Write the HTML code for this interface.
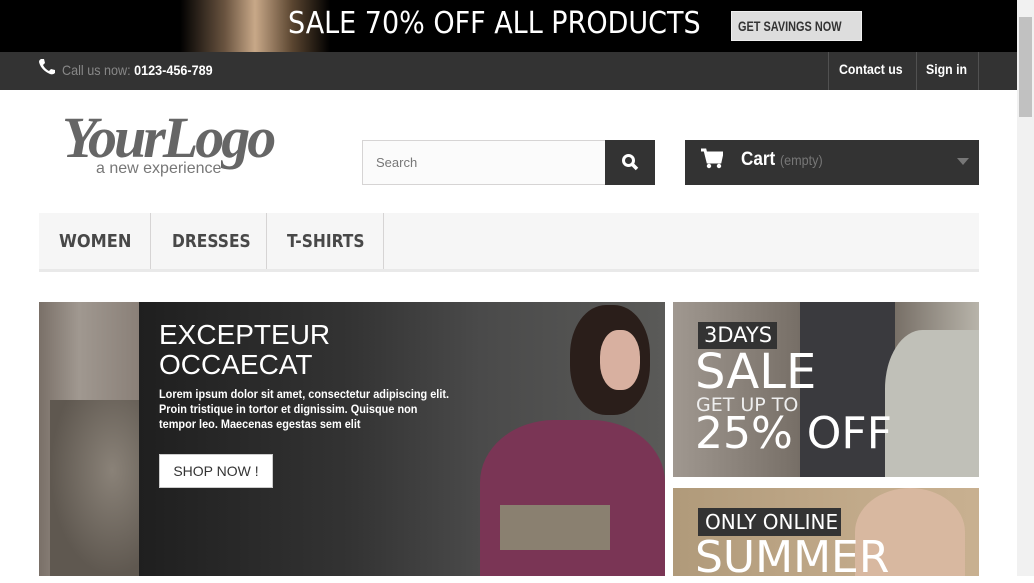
<!DOCTYPE html>
<html><head><style>
*{margin:0;padding:0;box-sizing:border-box}
body{width:1034px;height:576px;overflow:hidden;background:#fff;font-family:"Liberation Sans",sans-serif;position:relative}
.a{position:absolute}
.n{display:inline-block;transform-origin:0 0;white-space:nowrap}
</style></head><body>
<div class="a" style="left:0;top:0;width:1017px;height:52px;background:#000"></div>
<div class="a" style="left:180px;top:0;width:150px;height:52px;background:linear-gradient(90deg,#000,#6a5440 30%,#c8a888 50%,#5a4530 75%,#000)"></div>
<div class="a" style="left:288px;top:6px;font-size:30px;color:#fff;font-family:'DejaVu Sans Condensed','DejaVu Sans',sans-serif;white-space:nowrap">SALE 70% OFF ALL PRODUCTS</div>
<div class="a" style="left:731px;top:11px;width:131px;height:30px;background:#ddd;border:1px solid #eee;font-size:14px;color:#333;line-height:28px;font-weight:bold;padding-left:6px;white-space:nowrap"><span class="n" style="transform:scaleX(0.78)">GET SAVINGS NOW</span></div>
<div class="a" style="left:0;top:52px;width:1017px;height:38px;background:#333"></div>
<svg class="a" style="left:38px;top:58px" width="18" height="18" viewBox="0 0 18 18"><path d="M3 1 L6 1 L7 5 L5 7 Q7 11 11 13 L13 11 L17 12 L17 15 Q15 17 12 16 Q3 12 1 4 Q1 2 3 1Z" fill="#fff"/></svg>
<div class="a" style="left:62px;top:62px;font-size:14px;color:#888;white-space:nowrap"><span class="n" style="transform:scaleX(0.9)">Call us now: <b style="color:#fff">0123-456-789</b></span></div>
<div class="a" style="left:828px;top:52px;width:1px;height:38px;background:#515151"></div>
<div class="a" style="left:916px;top:52px;width:1px;height:38px;background:#515151"></div>
<div class="a" style="left:978px;top:52px;width:1px;height:38px;background:#515151"></div>
<div class="a" style="left:839px;top:61px;font-size:14px;color:#fff;font-weight:bold"><span class="n" style="transform:scaleX(0.88)">Contact us</span></div>
<div class="a" style="left:926px;top:61px;font-size:14px;color:#fff;font-weight:bold"><span class="n" style="transform:scaleX(0.88)">Sign in</span></div>
<div class="a" style="left:62px;top:104px;font-size:58px;color:#666;font-family:'Liberation Serif',serif;font-style:italic;font-weight:bold;letter-spacing:-3px;white-space:nowrap">YourLogo</div>
<div class="a" style="left:96px;top:160px;font-size:16px;color:#777;background:#fff;line-height:18px">a new experience</div>
<div class="a" style="left:362px;top:140px;width:244px;height:45px;background:#fbfbfb;border:1px solid #d6d4d4;font-size:13px;color:#777;padding:14px 13px">Search</div>
<div class="a" style="left:605px;top:140px;width:50px;height:45px;background:#333"></div>
<svg class="a" style="left:621px;top:153px" width="18" height="18" viewBox="0 0 18 18"><circle cx="7.5" cy="7.5" r="5" fill="none" stroke="#fff" stroke-width="3"/><path d="M11 11 L16 16" stroke="#fff" stroke-width="3.5"/></svg>
<div class="a" style="left:685px;top:140px;width:294px;height:45px;background:#333"></div>
<svg class="a" style="left:701px;top:148px" width="22" height="22" viewBox="0 0 22 22"><path d="M0 2 H4 L7 14 H19 L21 5 H6" fill="none" stroke="#fff" stroke-width="3"/><path d="M6 5 H21 L19 13 H8Z" fill="#fff"/><circle cx="8" cy="18" r="2.2" fill="#fff"/><circle cx="18" cy="18" r="2.2" fill="#fff"/></svg>
<div class="a" style="left:741px;top:149px;font-size:19px;color:#fff;font-weight:bold;white-space:nowrap"><span class="n" style="transform:scaleX(0.9)">Cart <span style="font-size:14px;color:#777;font-weight:normal">(empty)</span></span></div>
<div class="a" style="left:957px;top:158px;border:6px solid transparent;border-top:7px solid #777"></div>
<div class="a" style="left:39px;top:213px;width:940px;height:59px;background:#f6f6f6;border-bottom:3px solid #e9e9e9"></div>
<div class="a" style="left:150px;top:213px;width:1px;height:56px;background:#d6d4d4"></div>
<div class="a" style="left:266px;top:213px;width:1px;height:56px;background:#d6d4d4"></div>
<div class="a" style="left:383px;top:213px;width:1px;height:56px;background:#d6d4d4"></div>
<div class="a" style="left:59px;top:231px;font-size:18px;color:#484848;font-family:'DejaVu Sans',sans-serif;font-weight:bold"><span class="n" style="transform:scaleX(0.9)">WOMEN</span></div>
<div class="a" style="left:172px;top:231px;font-size:18px;color:#484848;font-family:'DejaVu Sans',sans-serif;font-weight:bold"><span class="n" style="transform:scaleX(0.86)">DRESSES</span></div>
<div class="a" style="left:287px;top:231px;font-size:18px;color:#484848;font-family:'DejaVu Sans',sans-serif;font-weight:bold"><span class="n" style="transform:scaleX(0.86)">T-SHIRTS</span></div>
<div class="a" style="left:39px;top:302px;width:100px;height:274px;background:linear-gradient(90deg,#7a7068,#a09890 40%,#8a8078)"></div>
<div class="a" style="left:50px;top:400px;width:89px;height:176px;background:radial-gradient(ellipse at 70% 40%,#8a8278,#5f5850 70%)"></div>
<div class="a" style="left:139px;top:302px;width:526px;height:274px;background:linear-gradient(90deg,#1f1f1f,#333 40%,#4a4a4a 65%,#5a5a58)"></div>
<div class="a" style="left:480px;top:420px;width:185px;height:156px;background:#7a3555;border-radius:40% 40% 0 0"></div>
<div class="a" style="left:570px;top:305px;width:80px;height:110px;background:#2a1e1a;border-radius:45%"></div>
<div class="a" style="left:600px;top:330px;width:40px;height:60px;background:#d8b0a0;border-radius:45%"></div>
<div class="a" style="left:500px;top:505px;width:110px;height:45px;background:#8a8070"></div>
<div class="a" style="left:159px;top:320px;font-size:28px;color:#fff;line-height:30px">EXCEPTEUR<br>OCCAECAT</div>
<div class="a" style="left:159px;top:387px;font-size:12px;color:#fff;line-height:15px;font-weight:bold;white-space:nowrap"><span class="n" style="transform:scaleX(0.91)">Lorem ipsum dolor sit amet, consectetur adipiscing elit.<br>Proin tristique in tortor et dignissim. Quisque non<br>tempor leo. Maecenas egestas sem elit</span></div>
<div class="a" style="left:159px;top:454px;width:114px;height:34px;background:#fff;border:1px solid #ccc;font-size:14px;color:#333;text-align:center;line-height:32px">SHOP NOW !</div>
<div class="a" style="left:673px;top:302px;width:306px;height:175px;background:linear-gradient(90deg,#a09890,#787068 40%,#5a5048 60%,#b8b4aa)"></div>
<div class="a" style="left:800px;top:302px;width:95px;height:175px;background:#3a3a3e"></div>
<div class="a" style="left:885px;top:330px;width:94px;height:147px;background:#c0c0b8;border-radius:40% 0 0 0"></div>
<div class="a" style="left:698px;top:322px;width:79px;height:27px;background:#333;color:#fff;font-size:21px;padding-left:6px;line-height:27px;font-family:'DejaVu Sans',sans-serif">3DAYS</div>
<div class="a" style="left:695px;top:346px;font-size:48px;color:#fff;line-height:52px;font-family:'DejaVu Sans',sans-serif">SALE</div>
<div class="a" style="left:696px;top:394px;font-size:19px;color:#eee;font-family:'DejaVu Sans',sans-serif">GET UP TO</div>
<div class="a" style="left:695px;top:408px;font-size:44px;color:#fff;font-family:'DejaVu Sans',sans-serif">25% OFF</div>
<div class="a" style="left:673px;top:488px;width:306px;height:88px;background:linear-gradient(90deg,#b09a7a,#c4ac8c 70%,#c8b090)"></div>
<div class="a" style="left:855px;top:488px;width:110px;height:88px;background:#d8b8a0;border-radius:50% 50% 0 0"></div>
<div class="a" style="left:698px;top:508px;width:143px;height:28px;background:#333;color:#fff;font-size:20px;padding-left:7px;line-height:28px;font-family:'DejaVu Sans',sans-serif">ONLY ONLINE</div>
<div class="a" style="left:695px;top:532px;font-size:44px;color:#fff;font-family:'DejaVu Sans',sans-serif">SUMMER</div>
<div class="a" style="left:1017px;top:0;width:17px;height:576px;background:#f1f1f1"></div>
<div class="a" style="left:1019px;top:17px;width:13px;height:100px;background:#c1c1c1"></div>
</body></html>
